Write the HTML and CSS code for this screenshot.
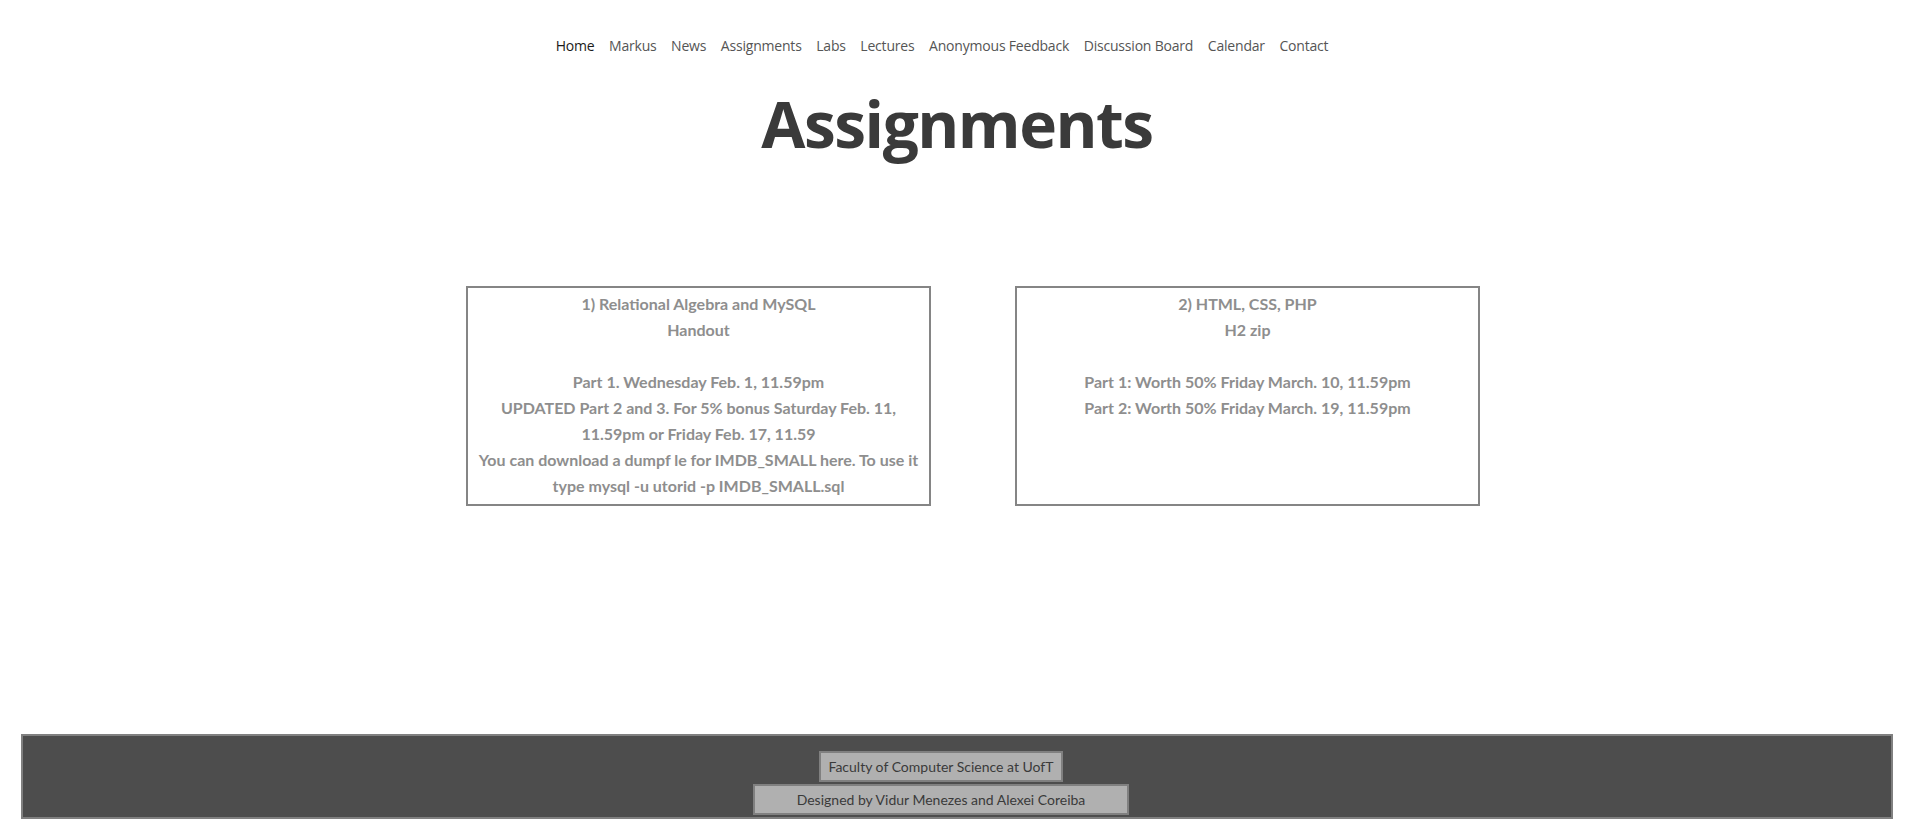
FILE: index.html
```html
<!DOCTYPE html>
<html>
<head>
<meta charset="utf-8">
<title>Assignments</title>
<link rel="stylesheet" href="styles.css">
</head>
<body>
<header class="top">
  <nav class="nav">
    <a class="nav-link active" href="#">Home</a>
    <a class="nav-link" href="#">Markus</a>
    <a class="nav-link" href="#">News</a>
    <a class="nav-link" href="#">Assignments</a>
    <a class="nav-link" href="#">Labs</a>
    <a class="nav-link" href="#">Lectures</a>
    <a class="nav-link" href="#">Anonymous Feedback</a>
    <a class="nav-link" href="#">Discussion Board</a>
    <a class="nav-link" href="#">Calendar</a>
    <a class="nav-link" href="#">Contact</a>
  </nav>
  <h1 class="title">Assignments</h1>
</header>
<main class="cards">
  <section class="card">
    <div>1) Relational Algebra and MySQL</div>
    <div>Handout</div>
    <div class="blank">&nbsp;</div>
    <div>Part 1. Wednesday Feb. 1, 11.59pm</div>
    <div>UPDATED Part 2 and 3. For 5% bonus Saturday Feb. 11,<br>11.59pm or Friday Feb. 17, 11.59</div>
    <div>You can download a dumpf le for IMDB_SMALL here. To use it<br>type mysql -u utorid -p IMDB_SMALL.sql</div>
  </section>
  <section class="card">
    <div>2) HTML, CSS, PHP</div>
    <div>H2 zip</div>
    <div class="blank">&nbsp;</div>
    <div>Part 1: Worth 50% Friday March. 10, 11.59pm</div>
    <div>Part 2: Worth 50% Friday March. 19, 11.59pm</div>
  </section>
</main>
<footer class="footer">
  <div class="foot-item">Faculty of Computer Science at UofT</div>
  <div class="foot-item wide">Designed by Vidur Menezes and Alexei Coreiba</div>
</footer>
</body>
</html>
```
FILE: styles.css
```css
html, body {
  margin: 0;
  padding: 0;
  background: #ffffff;
}
body {
  width: 1914px;
  height: 840px;
  font-family: "Open Sans", "Liberation Sans", sans-serif;
}
.top {
  display: flex;
  flex-direction: column;
  align-items: center;
}
.nav {
  display: flex;
  gap: 14.6px;
  padding-top: 35px;
  padding-right: 30px;
  height: 20px;
  align-items: center;
}
.nav-link {
  font-family: "Open Sans", sans-serif;
  font-size: 14px;
  color: #555555;
  text-decoration: none;
  letter-spacing: -0.2px;
}
.nav-link.active {
  color: #1a1a1a;
}
.title {
  margin: 29px 0 0 0;
  font-family: "Open Sans", sans-serif;
  font-weight: 700;
  font-size: 64px;
  line-height: 80px;
  color: #3a3a3a;
  letter-spacing: -1.5px;
}
.cards {
  display: flex;
  justify-content: center;
  gap: 84px;
  padding-left: 32px;
  margin-top: 122px;
}
.card {
  width: 455px;
  height: 210px;
  padding: 3px 3px;
  border: 2px solid #858585;
  text-align: center;
  font-family: "Lato", sans-serif;
  font-weight: 700;
  font-size: 16px;
  line-height: 26px;
  color: #8e8e8e;
}
.footer {
  margin: 228px 21px 0 21px;
  border: 2px solid #808080;
  background: #4d4d4d;
  display: flex;
  flex-direction: column;
  align-items: center;
  justify-content: flex-end;
  gap: 2px;
  padding: 0 32px 2px 0;
  box-sizing: border-box;
  height: 85px;
}
.foot-item {
  height: 31px;
  box-sizing: border-box;
  padding: 0 7px;
  border: 2px solid #808080;
  background: #b0b0b0;
  color: #3a3a3a;
  font-family: "Lato", sans-serif;
  font-size: 14px;
  line-height: 27px;
}
.foot-item.wide {
  padding: 0 42px;
}
```
